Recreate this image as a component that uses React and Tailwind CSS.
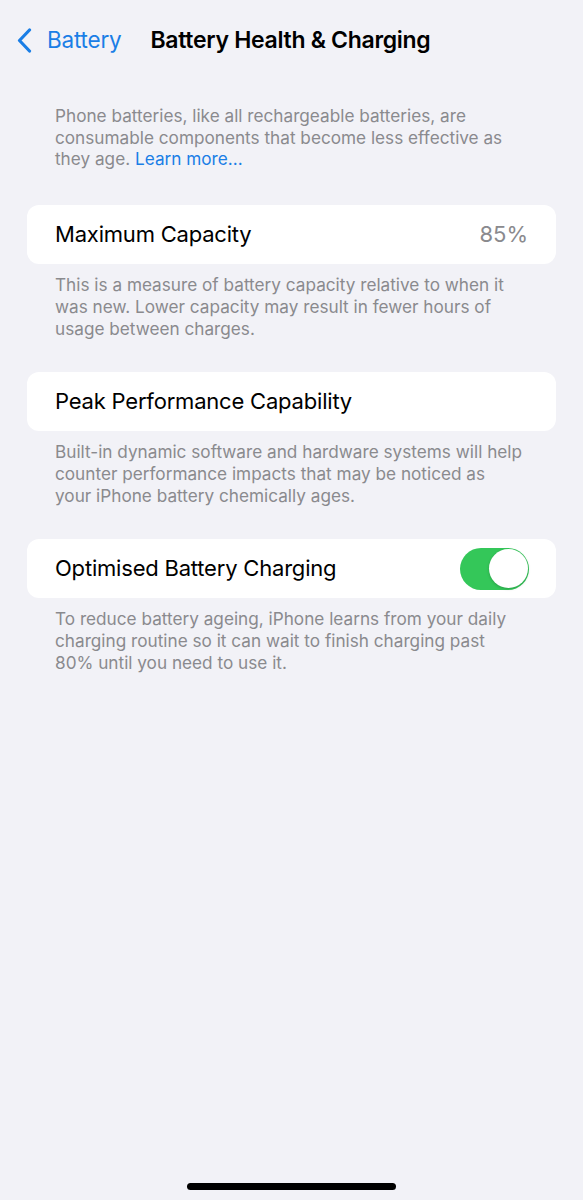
export default function App() {
  const font = { fontFamily: 'Inter, "Noto Sans", sans-serif' };
  return (
    <div className="min-h-[1200px] w-full bg-[#f2f2f7] relative" style={font}>
      <div className="flex items-center h-[80px]">
        <div className="flex items-center pl-[17px]">
          <svg width="15" height="25" viewBox="0 0 15 25" fill="none">
            <path d="M12.5 2 L2.5 12.5 L12.5 23" stroke="#1a7ee6" strokeWidth="3.2" strokeLinecap="round" strokeLinejoin="round" />
          </svg>
          <span className="ml-[15px] text-[22.5px] text-[#1a7ee6] tracking-[-0.2px]">Battery</span>
        </div>
        <span className="ml-[29px] text-[23px] font-semibold text-black tracking-[-0.3px]">Battery Health &amp; Charging</span>
      </div>

      <div className="pt-[25px] px-[55px] text-[17.2px] leading-[21.7px] text-[#8a8a8e] whitespace-nowrap">
        Phone batteries, like all rechargeable batteries, are<br />consumable components that become less effective as<br />they age. <span className="text-[#1a7ee6]">Learn more...</span>
      </div>

      <div className="mt-[35px] mx-[27px] h-[59px] bg-white rounded-[12px] flex items-center justify-between px-[28px]">
        <span className="text-[22px] text-black tracking-[-0.2px]">Maximum Capacity</span>
        <span className="text-[22px] text-[#8a8a8e]">85%</span>
      </div>
      <div className="pt-[10px] px-[55px] text-[17.2px] leading-[21.7px] text-[#8a8a8e] whitespace-nowrap">
        This is a measure of battery capacity relative to when it<br />was new. Lower capacity may result in fewer hours of<br />usage between charges.
      </div>

      <div className="mt-[33px] mx-[27px] h-[59px] bg-white rounded-[12px] flex items-center px-[28px]">
        <span className="text-[22px] text-black tracking-[-0.2px]">Peak Performance Capability</span>
      </div>
      <div className="pt-[10px] px-[55px] text-[17.2px] leading-[21.7px] text-[#8a8a8e] whitespace-nowrap">
        Built-in dynamic software and hardware systems will help<br />counter performance impacts that may be noticed as<br />your iPhone battery chemically ages.
      </div>

      <div className="mt-[33px] mx-[27px] h-[59px] bg-white rounded-[12px] flex items-center justify-between pl-[28px] pr-[27px]">
        <span className="text-[22px] text-black tracking-[-0.2px]">Optimised Battery Charging</span>
        <div className="w-[69px] h-[42px] rounded-full bg-[#34c759] flex items-center justify-end pr-[1.5px]">
          <div className="w-[39px] h-[39px] rounded-full bg-white shadow-[0_1px_3px_rgba(0,0,0,0.2)]" />
        </div>
      </div>
      <div className="pt-[10px] px-[55px] text-[17.2px] leading-[21.7px] text-[#8a8a8e] whitespace-nowrap">
        To reduce battery ageing, iPhone learns from your daily<br />charging routine so it can wait to finish charging past<br />80% until you need to use it.
      </div>

      <div className="absolute left-[187px] top-[1183px] w-[209px] h-[7px] rounded-full bg-black" />
    </div>
  );
}
